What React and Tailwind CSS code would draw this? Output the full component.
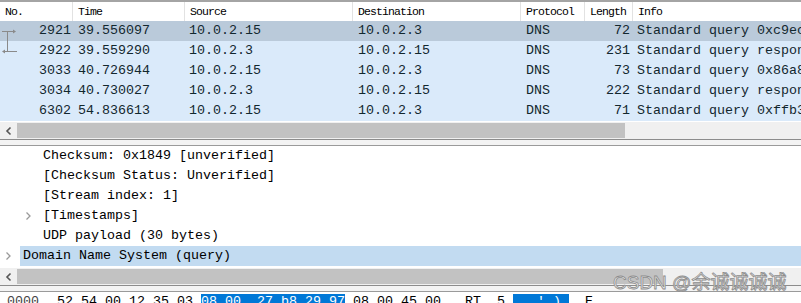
import React from "react";

const mono = { fontFamily: '"Liberation Mono", "DejaVu Sans Mono", monospace' };

const rows = [
  ["2921", "39.556097", "10.0.2.15", "10.0.2.3", "DNS", "72", "Standard query 0xc9ec A www.example.com", "req"],
  ["2922", "39.559290", "10.0.2.3", "10.0.2.15", "DNS", "231", "Standard query response 0xc9ec A", "resp"],
  ["3033", "40.726944", "10.0.2.15", "10.0.2.3", "DNS", "73", "Standard query 0x86a8 A", null],
  ["3034", "40.730027", "10.0.2.3", "10.0.2.15", "DNS", "222", "Standard query response 0x86a8", null],
  ["6302", "54.836613", "10.0.2.15", "10.0.2.3", "DNS", "71", "Standard query 0xffb3 A", null],
];

const cols = "grid grid-cols-[73px_112px_168px_168px_64px_48px_1fr]";

function RelIcon({ kind }) {
  if (!kind) return null;
  if (kind === "req") {
    return (
      <svg width="18" height="20" className="shrink-0" viewBox="0 0 18 20">
        <path d="M2 10.5H15" stroke="#8a8a8a" strokeWidth="1" fill="none" />
        <path d="M13 8.5L16 10.5L13 12.5Z" fill="#8a8a8a" />
        <path d="M7.5 10.5V20" stroke="#8a8a8a" strokeWidth="1" fill="none" />
      </svg>
    );
  }
  return (
    <svg width="18" height="20" className="shrink-0" viewBox="0 0 18 20">
      <path d="M7.5 0V10.5" stroke="#8a8a8a" strokeWidth="1" fill="none" />
      <path d="M3 10.5H17" stroke="#8a8a8a" strokeWidth="1" fill="none" />
      <path d="M5 8.5L2 10.5L5 12.5Z" fill="#8a8a8a" />
    </svg>
  );
}

function Chevron({ className }) {
  return (
    <svg width="7" height="10" viewBox="0 0 7 10" className={className}>
      <path d="M1.5 1.5L5 5L1.5 8.5" stroke="#9a9a9a" strokeWidth="1.3" fill="none" />
    </svg>
  );
}

function LeftArrow() {
  return (
    <svg width="8" height="10" viewBox="0 0 8 10">
      <path d="M5.5 1.5L2 5L5.5 8.5" stroke="#555" strokeWidth="1.6" fill="none" />
    </svg>
  );
}

function Scrollbar({ thumb }) {
  return (
    <div className="flex h-[17px] bg-[#f0f0f0]">
      <div className="flex w-[17px] items-center justify-center">
        <LeftArrow />
      </div>
      <div className="flex-1 py-[1px]">
        <div className="h-full bg-[#c2c2c2]" style={{ width: thumb }} />
      </div>
    </div>
  );
}

function Splitter() {
  return (
    <div className="flex flex-col">
      <div className="h-[1px] bg-[#8c8c8c]" />
      <div className="h-[5px] bg-[#f3f3f3]" />
      <div className="h-[1px] bg-[#9a9a9a]" />
    </div>
  );
}

export default function App() {
  const headers = ["No.", "Time", "Source", "Destination", "Protocol", "Length", "Info"];
  return (
    <div className="relative h-[303px] w-[801px] overflow-hidden bg-white" style={mono}>
      {/* packet list */}
      <div className="h-[2px] bg-[#a4a4a4]" />
      <div className={`${cols} h-[19px] bg-white text-[11.5px] tracking-[-0.9px] text-black`}>
        {headers.map((h, i) => (
          <div
            key={h}
            className={`flex items-center overflow-hidden whitespace-nowrap pl-[5px] ${i < 6 ? "border-r border-[#e2e2e2]" : ""}`}
          >
            {h}
          </div>
        ))}
      </div>
      <div className="text-[13.33px] leading-[20px] text-[#12272e]">
        {rows.map((r, idx) => (
          <div key={r[0]} className={`${cols} h-[20px] ${idx === 0 ? "bg-[#bacada]" : "bg-[#daeafa]"}`}>
            <div className="flex items-center pr-[2px]">
              <RelIcon kind={r[7]} />
              <span className="ml-auto">{r[0]}</span>
            </div>
            <div className="pl-[5px]">{r[1]}</div>
            <div className="pl-[4px]">{r[2]}</div>
            <div className="pl-[5px]">{r[3]}</div>
            <div className="pl-[5px]">{r[4]}</div>
            <div className="pr-[3px] text-right">{r[5]}</div>
            <div className="overflow-hidden whitespace-nowrap pl-[4px]">{r[6]}</div>
          </div>
        ))}
      </div>
      <div className="h-[1px] bg-white" />
      <Scrollbar thumb={608} />
      <Splitter />

      {/* details */}
      <div className="text-[13.33px] leading-[20px] text-black">
        <div className="pl-[43px] whitespace-pre">Checksum: 0x1849 [unverified]</div>
        <div className="pl-[43px] whitespace-pre">[Checksum Status: Unverified]</div>
        <div className="pl-[43px] whitespace-pre">[Stream index: 1]</div>
        <div className="flex items-center pl-[25px] whitespace-pre">
          <Chevron className="mr-[11px]" />
          <span>[Timestamps]</span>
        </div>
        <div className="pl-[43px] whitespace-pre">UDP payload (30 bytes)</div>
        <div className="flex items-center pl-[5px] whitespace-pre">
          <Chevron className="mr-[8px]" />
          <div className="flex-1 bg-[#c2dbf1] pl-[3px]">Domain Name System (query)</div>
        </div>
      </div>
      <div className="h-[2px] bg-white" />
      <Scrollbar thumb={646} />
      <Splitter />

      {/* bytes */}
      <div className="flex h-[16px] items-start pt-[2px] whitespace-pre text-[13.33px] leading-[16px] text-black">
        <span className="ml-[7px] w-[50px] text-[#444]">0000</span>
        <span>52 54 00 12 35 03 </span>
        <span className="bg-[#0078d7] text-white">08 00  27 b8 29 97</span>
        <span> 08 00 45 00   RT..5.</span>
        <span className="bg-[#0078d7] text-white">.. '.).</span>
        <span>..E.</span>
      </div>

      {/* watermark overlay */}
      <div
        className="pointer-events-none absolute left-[613px] top-[271px] text-[19px] leading-[24px] text-[#eeeeee] [-webkit-text-stroke:0.8px_#8c8c8c]"
        style={{ fontFamily: '"Liberation Sans", "Noto Sans CJK SC", sans-serif' }}
      >
        CSDN @余诚诚诚诚
      </div>
    </div>
  );
}
